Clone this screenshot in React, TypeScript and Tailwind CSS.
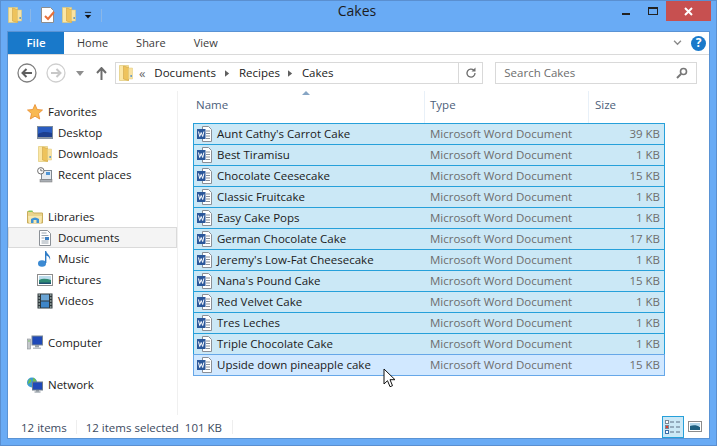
import { ReactNode } from 'react';

const files = [
  ["Aunt Cathy's Carrot Cake", '39 KB'],
  ['Best Tiramisu', '1 KB'],
  ['Chocolate Ceesecake', '15 KB'],
  ['Classic Fruitcake', '1 KB'],
  ['Easy Cake Pops', '1 KB'],
  ['German Chocolate Cake', '17 KB'],
  ["Jeremy's Low-Fat Cheesecake", '1 KB'],
  ["Nana's Pound Cake", '15 KB'],
  ['Red Velvet Cake', '1 KB'],
  ['Tres Leches', '1 KB'],
  ['Triple Chocolate Cake', '1 KB'],
  ['Upside down pineapple cake', '15 KB'],
];

const FolderIcon = ({ className = 'w-[14px] h-4' }: { className?: string }) => (
  <svg viewBox="0 0 14 16" className={className}>
    <path d="M.5 .5h9v15h-9z" fill="#fbe6a4" stroke="#e0c878" strokeWidth="0.7" />
    <path d="M4.500 1l5 1.500v13l-5-1.500z" fill="#eec35c" stroke="#cfa344" strokeWidth="0.6" />
    <path d="M9.500 3h4v11h-4z" fill="#f9e2a0" stroke="#e0c878" strokeWidth="0.5" />
    <rect x="11.500" y="10" width="1.300" height="2" fill="#4a90d0" />
  </svg>
);

const WordIcon = () => (
  <svg viewBox="0 0 16 16" className="w-4 h-4 shrink-0">
    <path d="M5.500 .5h6l3 3v12h-9z" fill="#fff" stroke="#8a8f96" strokeWidth="1" />
    <path d="M9 5h4M9 7.500h4M9 10h4M9 12.500h4" stroke="#8a9099" strokeWidth="1" />
    <rect x="0" y="3" width="8.500" height="10" fill="#2b579a" />
    <path d="M1.500 5.500l1.200 5 1.500-4 1.500 4 1.200-5" stroke="#fff" strokeWidth="1" fill="none" />
  </svg>
);

const Star = () => (
  <svg viewBox="0 0 16 16" className="w-4 h-4">
    <path d="M8 .5l2.200 5 5.300.5-4 3.600 1.200 5.400L8 12.200 3.300 15l1.200-5.400-4-3.600 5.300-.5z" fill="#f8b952" stroke="#e88a2c" strokeWidth="0.8" />
  </svg>
);

const DesktopIcon = () => (
  <svg viewBox="0 0 16 16" className="w-4 h-4">
    <rect x="0.500" y="1.500" width="15" height="12" fill="#2a5cc0" stroke="#7a8a9c" />
    <path d="M1 9c5-3 9-2 14-1v5H1z" fill="#1d3f8e" />
    <rect x="0.500" y="12" width="15" height="1.500" fill="#8b96a3" />
  </svg>
);

const RecentIcon = () => (
  <svg viewBox="0 0 16 16" className="w-4 h-4">
    <rect x="4.500" y="3.500" width="10" height="9" fill="#e6eaee" stroke="#808890" />
    <rect x="9" y="5" width="4" height="3" fill="#4e94d4" />
    <rect x="3" y="12.500" width="12" height="2.500" fill="#a9aeb4" stroke="#777" strokeWidth="0.5" />
    <circle cx="3.800" cy="3.800" r="3.200" fill="#fff" stroke="#6e6e6e" />
    <path d="M3.800 1.800v2h1.800" stroke="#555" strokeWidth="0.8" fill="none" />
  </svg>
);

const LibrariesIcon = () => (
  <svg viewBox="0 0 16 16" className="w-4 h-4">
    <path d="M.5 2.500h5l1 1.500h9v10H.5z" fill="#ead48c" stroke="#c9ad5c" />
    <rect x="1.500" y="1.500" width="4" height="1.500" fill="#7ecb5c" />
    <path d="M1 7h14l-1 7H2z" fill="#f7e7ae" />
    <path d="M4 14v-4q4-3 8 0v4h-2.500v-3h-3v3z" fill="#3f93d6" />
  </svg>
);

const DocumentsIcon = () => (
  <svg viewBox="0 0 16 16" className="w-4 h-4">
    <path d="M2.500 .5h8l3 3v12h-11z" fill="#fff" stroke="#8b9096" />
    <path d="M4.500 3h5M4.500 5.500h7M4.500 11h7M4.500 13h7M4.500 8h3" stroke="#99a4ae" />
    <rect x="8" y="7" width="4" height="3" fill="#3a7fc4" />
  </svg>
);

const MusicIcon = () => (
  <svg viewBox="0 0 16 16" className="w-4 h-4">
    <ellipse cx="5" cy="12.500" rx="4" ry="3.200" fill="#3c8ad2" />
    <path d="M8 12V0h1.200c.3 3 5 4 3.800 9-.5-3-2.500-4-3.600-4.500V12z" fill="#2f7cc6" />
  </svg>
);

const PicturesIcon = () => (
  <svg viewBox="0 0 16 16" className="w-4 h-4">
    <rect x="0.500" y="2.500" width="15" height="11" fill="#fff" stroke="#8c8c8c" />
    <rect x="2" y="4" width="12" height="4" fill="#bcdcec" />
    <path d="M2 8c4-2 8-1 12 0v4H2z" fill="#2e8a74" />
    <rect x="2" y="10.500" width="12" height="1.500" fill="#1d4f70" />
  </svg>
);

const VideosIcon = () => (
  <svg viewBox="0 0 16 16" className="w-4 h-4">
    <rect x="0.500" y="0.500" width="15" height="15" fill="#30383c" />
    <rect x="4" y="1.500" width="8" height="6" fill="#6aa4d4" />
    <rect x="4" y="8.500" width="8" height="6" fill="#3f86c8" />
    <path d="M1.500 2h1.500M1.500 5h1.500M1.500 8h1.500M1.500 11h1.500M1.500 14h1.500M13 2h1.500M13 5h1.500M13 8h1.500M13 11h1.500M13 14h1.500" stroke="#c9e0d8" strokeWidth="1.200" />
  </svg>
);

const ComputerIcon = () => (
  <svg viewBox="0 0 16 16" className="w-4 h-4">
    <rect x="0.500" y="4" width="3" height="10" fill="#c4c8cc" stroke="#8a8f94" strokeWidth="0.6" />
    <rect x="1.200" y="5.500" width="1.500" height="1" fill="#69c04c" />
    <rect x="5" y="1" width="10.500" height="9" fill="#1f49b8" stroke="#7a8794" />
    <rect x="8" y="10" width="4" height="2.500" fill="#9aa2aa" />
    <rect x="6" y="12.500" width="8" height="1.500" fill="#b8bec4" />
  </svg>
);

const NetworkIcon = () => (
  <svg viewBox="0 0 16 16" className="w-4 h-4">
    <circle cx="5" cy="5.500" r="5" fill="#3d9ad4" />
    <path d="M2 2.500c2-1 3 1 2 2.500s-3 1-3.500 3M6 .8c2 1 3 2 3.500 3.500L6 5z" fill="#6fc04c" />
    <rect x="5.500" y="5" width="10" height="8" fill="#1f49b8" stroke="#707c88" />
    <rect x="9" y="13" width="3" height="1.500" fill="#8a929a" />
    <rect x="7.500" y="14.500" width="6" height="1" fill="#7b8590" />
  </svg>
);

const SideRow = ({ icon, label, child, active }: { icon: ReactNode; label: string; child?: boolean; active?: boolean }) => (
  <div className={`h-[21px] flex items-center text-[11.500px] text-[#1a1a1a] border ${active ? 'bg-[#f4f4f4] border-[#dadada]' : 'border-transparent'} ${child ? 'pl-[28px]' : 'pl-[18px]'}`}>
    <span className="w-4 h-4 shrink-0 mr-[5px] flex justify-center">{icon}</span>
    <span>{label}</span>
  </div>
);

const Chevron = () => (
  <svg viewBox="0 0 6 8" className="w-[5px] h-[7px]">
    <path d="M0 0l5 4-5 4z" fill="#5f5f5f" />
  </svg>
);

const App = () => {
  return (
    <div className="w-[717px] h-[446px] overflow-hidden bg-[#69abf5] border border-[#5a8fd0] flex flex-col relative" style={{ fontFamily: '"Open Sans", "Noto Sans", sans-serif' }}>
      {/* Title bar */}
      <div className="h-[30px] flex items-start shrink-0 relative">
        <div className="flex items-center pl-[7px] pt-[6px] relative z-10">
          <FolderIcon />
          <div className="w-px h-[13px] bg-[#8ab7e8] ml-[8px]" />
          <svg viewBox="0 0 16 16" className="w-4 h-4 ml-[9px]">
            <path d="M1.500 .5h9l3 3v12h-12z" fill="#fff" stroke="#8d8d8d" />
            <path d="M5 9l3 3 6-7" stroke="#e8703a" strokeWidth="2" fill="none" />
          </svg>
          <FolderIcon className="w-[14px] h-4 ml-[6px]" />
          <svg viewBox="0 0 9 9" className="w-[8px] h-[9px] ml-[8px]">
            <path d="M1 1h7" stroke="#111" />
            <path d="M1 4h7L4.500 8z" fill="#111" />
          </svg>
          <div className="w-px h-[13px] bg-[#8ab7e8] ml-[9px]" />
        </div>
        <div className="absolute left-0 right-0 top-0 pr-[3px] text-center text-[14px] leading-[20px] text-[#1c1c1c]">Cakes</div>
        <div className="ml-auto flex items-start mr-[5px] relative">
          <div className="w-[8px] h-[2px] bg-[#222] mt-[12px] mr-[18px]" />
          <div className="w-[10px] h-[8px] border border-[#222] border-t-2 mt-[6px] mr-[8px]" />
          <div className="w-[45px] h-[20px] bg-[#c75050] flex items-center justify-center">
            <svg viewBox="0 0 9 9" className="w-[9px] h-[9px]">
              <path d="M1 1l7 7M8 1L1 8" stroke="#fff" strokeWidth="2" />
            </svg>
          </div>
        </div>
      </div>

      {/* Window body */}
      <div className="flex-1 ml-[6px] mr-[6px] mb-[6px] bg-white flex flex-col min-h-0 border border-[#5a93d4]">
        {/* Ribbon tabs */}
        <div className="h-[23px] flex items-stretch border-b border-[#dadada] shrink-0 relative">
          <div className="w-[56px] bg-[#1979ca] text-white text-[11.500px] font-semibold flex items-center justify-center">File</div>
          <div className="flex items-center text-[11px] text-[#3b3b3b] pl-[13px] gap-[28px]">
            <span>Home</span>
            <span>Share</span>
            <span>View</span>
          </div>
          <div className="ml-auto flex items-center pr-[3px] gap-[9px]">
            <svg viewBox="0 0 10 7" className="w-[9px] h-[6px]">
              <path d="M1 1l4 4 4-4" stroke="#8a8a8a" strokeWidth="1.600" fill="none" />
            </svg>
            <div className="w-[15px] h-[15px] rounded-full bg-[#1979ca] text-white text-[12px] font-bold flex items-center justify-center leading-none">?</div>
          </div>
        </div>

        {/* Nav bar */}
        <div className="h-[36px] flex items-center shrink-0 pl-[9px] pr-[12px]">
          <svg viewBox="0 0 20 20" className="w-5 h-5">
            <circle cx="10" cy="10" r="9" fill="#fff" stroke="#7f7f7f" strokeWidth="1.300" />
            <path d="M15 10H6M9.500 6L5.500 10l4 4" stroke="#5f5f5f" strokeWidth="2" fill="none" />
          </svg>
          <svg viewBox="0 0 20 20" className="w-5 h-5 ml-[9px]">
            <circle cx="10" cy="10" r="9" fill="#fff" stroke="#cfcfcf" strokeWidth="1.300" />
            <path d="M5 10h9M10.500 6l4 4-4 4" stroke="#c8c8c8" strokeWidth="2" fill="none" />
          </svg>
          <svg viewBox="0 0 8 5" className="w-[8px] h-[5px] ml-[10px]">
            <path d="M0 0h8L4 5z" fill="#8e8e8e" />
          </svg>
          <svg viewBox="0 0 11 13" className="w-[11px] h-[13px] ml-[12px]">
            <path d="M5.500 13V2M1 6l4.500-5L10 6" stroke="#6d6d6d" strokeWidth="2" fill="none" />
          </svg>
          <div className="ml-[8px] w-[369px] h-[22px] border border-[#d9d9d9] flex items-center text-[11.500px] text-[#1a1a1a]">
            <div className="pl-[3px]"><FolderIcon /></div>
            <span className="ml-[6px] text-[#6a6a6a] text-[13px] leading-none">«</span>
            <span className="ml-[9px]">Documents</span>
            <span className="ml-[9px]"><Chevron /></span>
            <span className="ml-[9px]">Recipes</span>
            <span className="ml-[8px]"><Chevron /></span>
            <span className="ml-[9px]">Cakes</span>
            <div className="ml-auto w-[24px] h-full border-l border-[#d9d9d9] flex items-center justify-center">
              <svg viewBox="0 0 12 12" className="w-3 h-3">
                <path d="M10 6a4 4 0 1 1-1.200-2.800" stroke="#6e6e6e" strokeWidth="1.300" fill="none" />
                <path d="M10.500 .5v4h-4z" fill="#6e6e6e" />
              </svg>
            </div>
          </div>
          <div className="ml-[12px] w-[202px] h-[22px] border border-[#d9d9d9] flex items-center text-[11.500px] text-[#6d6d6d] pl-[8px] pr-[8px]">
            <span>Search Cakes</span>
            <svg viewBox="0 0 12 12" className="w-3 h-3 ml-auto">
              <circle cx="7.500" cy="4.500" r="3" stroke="#777" strokeWidth="1.600" fill="none" />
              <path d="M5 7l-4 4" stroke="#777" strokeWidth="2" />
            </svg>
          </div>
        </div>

        {/* Main */}
        <div className="flex-1 flex min-h-0">
          <div className="w-[170px] shrink-0 border-r border-[#f0f0f0] pt-[10px] flex flex-col">
            <SideRow icon={<Star />} label="Favorites" />
            <SideRow icon={<DesktopIcon />} label="Desktop" child />
            <SideRow icon={<FolderIcon />} label="Downloads" child />
            <SideRow icon={<RecentIcon />} label="Recent places" child />
            <div className="h-[21px]" />
            <SideRow icon={<LibrariesIcon />} label="Libraries" />
            <SideRow icon={<DocumentsIcon />} label="Documents" child active />
            <SideRow icon={<MusicIcon />} label="Music" child />
            <SideRow icon={<PicturesIcon />} label="Pictures" child />
            <SideRow icon={<VideosIcon />} label="Videos" child />
            <div className="h-[21px]" />
            <SideRow icon={<ComputerIcon />} label="Computer" />
            <div className="h-[21px]" />
            <SideRow icon={<NetworkIcon />} label="Network" />
          </div>
          <div className="flex-1 pl-[15px] pr-[44px] min-w-0">
            <div className="h-[32px] flex text-[11.500px] text-[#4c607a] relative">
              <div className="w-[232px] pl-[3px] pt-[5px] border-r border-[#e8f0f8]">Name</div>
              <div className="w-[164px] pl-[5px] pt-[5px] border-r border-[#e8f0f8]">Type</div>
              <div className="pl-[6px] pt-[5px]">Size</div>
              <svg viewBox="0 0 8 4" className="absolute left-[109px] top-0 w-[8px] h-[4px]">
                <path d="M0 4l4-4 4 4z" fill="#86a5c4" />
              </svg>
            </div>
            <div className="flex flex-col w-[472px]">
              {files.map(([name, size], index) => {
                const hovered = index === files.length - 1;
                return (
                  <div
                    key={name}
                    className={`h-[22px] -mb-px last:mb-0 flex items-center border text-[11.500px] ${hovered ? 'bg-[#d1e8ff] border-[#66a7e8]' : 'bg-[#cbe8f6] border-[#26a0da]'}`}
                  >
                    <div className="w-[235px] flex items-center pl-[3px] text-[#1a1a1a]">
                      <WordIcon />
                      <span className="ml-[4px] whitespace-nowrap">{name}</span>
                    </div>
                    <div className="w-[165px] text-[#6d6d6d] pl-[1px]">Microsoft Word Document</div>
                    <div className="flex-1 text-right pr-[4px] text-[#6d6d6d]">{size}</div>
                  </div>
                );
              })}
            </div>
          </div>
        </div>

        {/* Status bar */}
        <div className="h-[23px] flex items-center text-[11.500px] text-[#3c4a60] shrink-0 pl-[13px]">
          <span className="mt-[2px]">12 items</span>
          <div className="w-px h-[14px] bg-[#eeeeee] ml-[9px] mr-[9px]" />
          <span className="mt-[2px]">12 items selected&nbsp; 101 KB</span>
          <div className="w-px h-[14px] bg-[#eeeeee] ml-[10px]" />
          <div className="ml-auto flex items-center pr-[7px] gap-[4px]">
            <div className="w-[22px] h-[22px] bg-[#cbe8f6] border border-[#26a0da] flex items-center justify-center">
              <svg viewBox="0 0 16 14" className="w-4 h-[14px]">
                <rect x="0.500" y="0.500" width="3" height="3" fill="#fff" stroke="#7a8794" />
                <rect x="0.500" y="5.500" width="3" height="3" fill="#e04030" stroke="#7a8794" />
                <rect x="0.500" y="10.500" width="3" height="3" fill="#fff" stroke="#3a6ea8" />
                <path d="M5 2h4M11 2h4M5 7h4M11 7h4M5 12h4M11 12h4" stroke="#5c6f85" />
              </svg>
            </div>
            <svg viewBox="0 0 14 11" className="w-[14px] h-[11px]">
              <rect x="0.500" y="0.500" width="13" height="10" fill="#fff" stroke="#8c8c8c" />
              <rect x="2" y="2" width="10" height="3" fill="#b4d8ec" />
              <path d="M2 5c3-1 7-1 10 1v3H2z" fill="#1d5f80" />
            </svg>
          </div>
        </div>
      </div>

      {/* Mouse pointer */}
      <svg viewBox="0 0 13 20" className="absolute left-[382px] top-[367px] w-[13px] h-[20px]">
        <path d="M1 1v15l3.500-3.300 2.500 6 2.500-1-2.500-6h5z" fill="#fff" stroke="#111" strokeWidth="1" />
      </svg>
    </div>
  );
};

export default App;
